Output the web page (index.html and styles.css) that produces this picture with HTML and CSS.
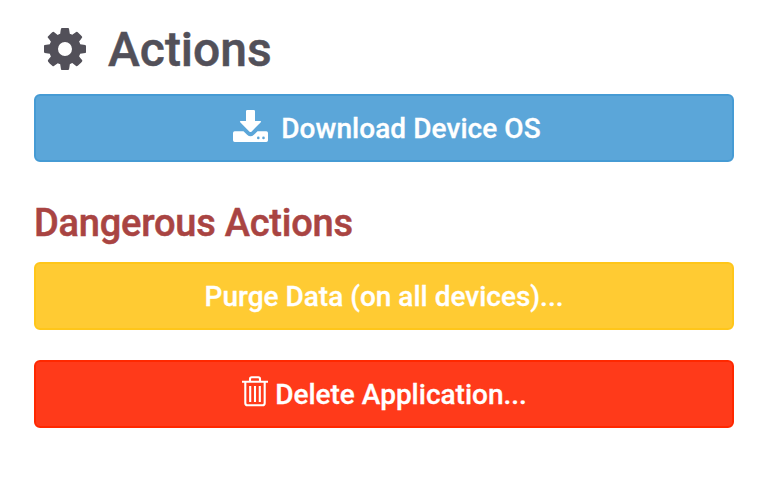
FILE: index.html
```html
<!DOCTYPE html>
<html lang="en">
<head>
<meta charset="utf-8">
<title>Actions</title>
<link rel="stylesheet" href="styles.css">
</head>
<body>
<main class="panel">
  <h1 class="title">
    <svg class="gear" viewBox="0 128 1536 1536" aria-hidden="true"><path d="M1024 896q0-106-75-181t-181-75-181 75-75 181 75 181 181 75 181-75 75-181zm512-109v222q0 12-8 23t-20 13l-185 28q-19 54-39 91 35 50 107 138 10 12 10 25t-9 23q-27 37-99 108t-94 71q-12 0-26-9l-138-108q-44 23-91 38-16 136-29 186-7 28-36 28h-222q-14 0-24.500-8.500t-11.500-21.500l-28-184q-49-16-90-37l-141 107q-10 9-25 9-14 0-25-11-126-114-165-168-7-10-7-23 0-12 8-23 15-21 51-66.500t54-70.500q-27-50-41-99l-183-27q-13-2-21-12.500t-8-23.500v-222q0-12 8-23t19-13l186-28q14-46 39-92-40-57-107-138-10-12-10-24 0-10 9-23 26-36 98.500-107.500t94.500-71.500q13 0 26 10l138 107q44-23 91-38 16-136 29-186 7-28 36-28h222q14 0 24.500 8.500t11.500 21.500l28 184q49 16 90 37l142-107q9-9 24-9 13 0 25 10 129 119 165 170 7 8 7 22 0 12-8 23-15 21-51 66.500t-54 70.500q26 50 41 98l183 28q13 2 21 12.500t8 23.500z"/></svg>
    <span>Actions</span>
  </h1>
  <button class="btn btn-primary">
    <svg class="download" viewBox="0 0 35 32" aria-hidden="true"><path d="M13 1.200Q13 0 14.200 0h6.600Q22 0 22 1.200V11h5.300q1.400 0 .5 1.200l-9.100 9.200q-1.200 1.200-2.400 0L7.200 12.200Q6.300 11 7.700 11H13z"/><path fill-rule="evenodd" d="M1.700 21.300h8.800l3.600 3.500q3.400 3 6.800 0l3.600-3.500h8.800Q35 21.300 35 23v7.300q0 1.700-1.700 1.700H1.700Q0 32 0 30.300V23q0-1.700 1.700-1.700zM25.300 26.600a1.300 1.300 0 1 0 0 2.600 1.300 1.300 0 0 0 0-2.600zm5.200 0a1.300 1.300 0 1 0 0 2.600 1.300 1.300 0 0 0 0-2.600z"/></svg>
    <span>Download Device OS</span>
  </button>
  <h2 class="subtitle">Dangerous Actions</h2>
  <button class="btn btn-warning"><span>Purge Data (on all devices)...</span></button>
  <button class="btn btn-danger">
    <svg class="trash" viewBox="0 0 26 31" aria-hidden="true"><path d="M0 5.700h26M8 5V3q0-1.700 1.700-1.700h6.600Q18 1.300 18 3v2M3.300 5.500V27q0 2.300 2.300 2.300h14.800q2.300 0 2.300-2.300V5.500M8.200 10v16M13 10v16M17.800 10v16"/></svg>
    <span>Delete Application...</span>
  </button>
</main>
</body>
</html>
```
FILE: styles.css
```css
* { box-sizing: border-box; }
body {
  margin: 0;
  background: #fff;
  font-family: Roboto, "Liberation Sans", sans-serif;
}
.panel {
  width: 700px;
  margin-left: 34px;
  padding-top: 20px;
  display: flex;
  flex-direction: column;
}
.title {
  display: flex;
  align-items: center;
  gap: 22px;
  height: 58px;
  margin: 0 0 16px;
  padding-left: 10px;
  color: #525059;
  font-size: 48px;
  font-weight: 500;
  line-height: 58px;
  -webkit-text-stroke: 0.5px currentColor;
}
.title span { padding-top: 1px; }
.gear { width: 42px; height: 42px; fill: currentColor; }
.subtitle {
  height: 46px;
  margin: 38px 0 16px;
  color: #a94442;
  font-size: 38px;
  font-weight: 500;
  line-height: 46px;
  letter-spacing: -0.23px;
  -webkit-text-stroke: 0.5px currentColor;
}
.btn {
  display: flex;
  align-items: center;
  justify-content: center;
  height: 68px;
  padding: 0;
  border: 2px solid;
  border-radius: 6px;
  color: #fff;
  font-family: inherit;
  font-size: 28px;
  font-weight: 500;
  line-height: 40px;
  -webkit-text-stroke: 0.3px currentColor;
}
.btn span { padding-top: 1px; }
.btn-primary { gap: 13px; padding-left: 6px; background: #5ba6d9; border-color: #469bd4; letter-spacing: 0.06px; }
.btn-warning { background: #ffcb33; border-color: #ffc61a; }
.btn-danger { gap: 7px; padding-left: 1px; margin-top: 30px; background: #ff3a1a; border-color: #ff2800; }
.download { width: 35px; height: 32px; margin-top: -4px; fill: currentColor; }
.trash {
  width: 26px;
  height: 31px;
  margin-top: -6px;
  fill: none;
  stroke: currentColor;
  stroke-width: 2.100;
}
```
